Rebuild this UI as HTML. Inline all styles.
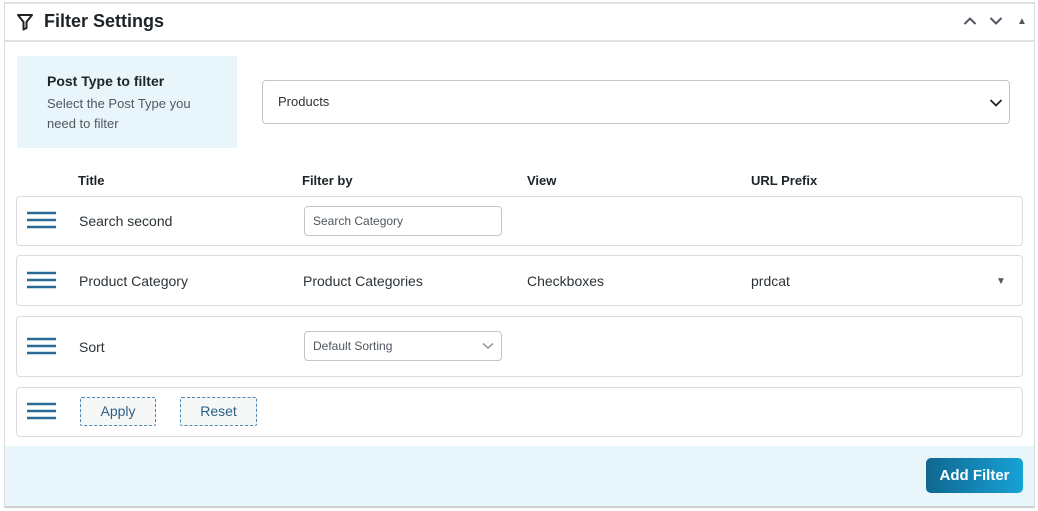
<!DOCTYPE html>
<html><head><meta charset="utf-8"><style>
*{box-sizing:border-box;margin:0;padding:0}
body{width:1038px;height:511px;background:#fff;font-family:"Liberation Sans",sans-serif;color:#1d2327;position:relative;overflow:hidden}
.panel{position:absolute;left:4px;top:2px;width:1031px;height:506px;border:1px solid #dcdcde;border-bottom:2px solid #d0d0d0;border-top:2px solid #e0e0e0}
.hdr{position:absolute;left:4px;top:2px;width:1031px;height:40px;border-bottom:2px solid #e0e0e0}
.a{position:absolute}
.row{position:absolute;left:16px;width:1007px;border:1px solid #dcdcde;border-radius:4px;background:#fff}
.t{font-size:14px;color:#2c3338}
.th{font-size:13px;font-weight:bold;color:#1d2327}
.btn{position:absolute;border:1px dashed #4a87b5;background:#f6f7f7;color:#2a5f86;font-size:14px;text-align:center;line-height:27px;border-radius:2px;height:29px}
.inp{position:absolute;border:1px solid #c3c4c7;border-radius:4px;font-size:12px;color:#50575e;padding-left:8px;background:#fff}
</style></head><body>
<div class="panel"></div>
<div class="hdr"></div>
<svg class="a" style="left:16px;top:13px" width="18" height="18" viewBox="0 0 18 18"><path d="M2 2h14l-5.5 7v6l-3 1.5V9z" fill="none" stroke="#1d2327" stroke-width="2" stroke-linejoin="round"/></svg>
<div class="a" style="left:44px;top:11px;font-size:18px;font-weight:bold;color:#1d2327">Filter Settings</div>
<svg class="a" style="left:963px;top:16px" width="14" height="10"><path d="M1.5 8L7 2.5 12.5 8" fill="none" stroke="#50575e" stroke-width="2"/></svg>
<svg class="a" style="left:989px;top:16px" width="14" height="10"><path d="M1.5 2L7 7.5 12.5 2" fill="none" stroke="#50575e" stroke-width="2"/></svg>
<div class="a" style="left:1017px;top:16px;font-size:10px;color:#50575e">▲</div>

<div class="a" style="left:17px;top:56px;width:220px;height:92px;background:#e8f6fc"></div>
<div class="a" style="left:47px;top:73px;font-size:14px;font-weight:bold">Post Type to filter</div>
<div class="a" style="left:47px;top:94px;font-size:13px;color:#50575e;line-height:20px">Select the Post Type you<br>need to filter</div>
<div class="a" style="left:262px;top:80px;width:748px;height:44px;border:1px solid #c3c4c7;border-radius:4px"></div>
<div class="a t" style="left:278px;top:94px;font-size:13px">Products</div>
<svg class="a" style="left:989px;top:98px" width="14" height="10"><path d="M1.5 2L7 7.5 12.5 2" fill="none" stroke="#1d2327" stroke-width="1.8"/></svg>

<div class="a th" style="left:78px;top:173px">Title</div>
<div class="a th" style="left:302px;top:173px">Filter by</div>
<div class="a th" style="left:527px;top:173px">View</div>
<div class="a th" style="left:751px;top:173px">URL Prefix</div>

<div class="row" style="top:196px;height:50px"></div>
<div class="row" style="top:255px;height:51px"></div>
<div class="row" style="top:316px;height:61px"></div>
<div class="row" style="top:387px;height:50px"></div>

<svg class="a" style="left:27px;top:211px" width="29" height="18"><path d="M0 2h29M0 9h29M0 16h29" stroke="#2a6a96" stroke-width="2.5"/></svg>
<svg class="a" style="left:27px;top:271px" width="29" height="18"><path d="M0 2h29M0 9h29M0 16h29" stroke="#2a6a96" stroke-width="2.5"/></svg>
<svg class="a" style="left:27px;top:337px" width="29" height="18"><path d="M0 2h29M0 9h29M0 16h29" stroke="#2a6a96" stroke-width="2.5"/></svg>
<svg class="a" style="left:27px;top:402px" width="29" height="18"><path d="M0 2h29M0 9h29M0 16h29" stroke="#2a6a96" stroke-width="2.5"/></svg>

<div class="a t" style="left:79px;top:213px">Search second</div>
<div class="inp" style="left:304px;top:206px;width:198px;height:30px;line-height:28px">Search Category</div>

<div class="a t" style="left:79px;top:273px">Product Category</div>
<div class="a t" style="left:303px;top:273px">Product Categories</div>
<div class="a t" style="left:527px;top:273px">Checkboxes</div>
<div class="a t" style="left:751px;top:273px">prdcat</div>
<div class="a" style="left:996px;top:276px;font-size:10px;color:#50575e">▼</div>

<div class="a t" style="left:79px;top:339px">Sort</div>
<div class="inp" style="left:304px;top:331px;width:198px;height:30px;line-height:28px">Default Sorting</div>
<svg class="a" style="left:482px;top:342px" width="12" height="8"><path d="M1 1.5L6 6 11 1.5" fill="none" stroke="#8c8f94" stroke-width="1.5"/></svg>

<div class="btn" style="left:80px;top:397px;width:76px">Apply</div>
<div class="btn" style="left:180px;top:397px;width:77px">Reset</div>

<div class="a" style="left:5px;top:446px;width:1029px;height:60px;background:#e8f6fc"></div>
<div class="a" style="left:926px;top:458px;width:97px;height:35px;border-radius:5px;background:linear-gradient(90deg,#0f6790,#17a2d6);color:#fff;font-size:15px;font-weight:bold;text-align:center;line-height:35px">Add Filter</div>
</body></html>
